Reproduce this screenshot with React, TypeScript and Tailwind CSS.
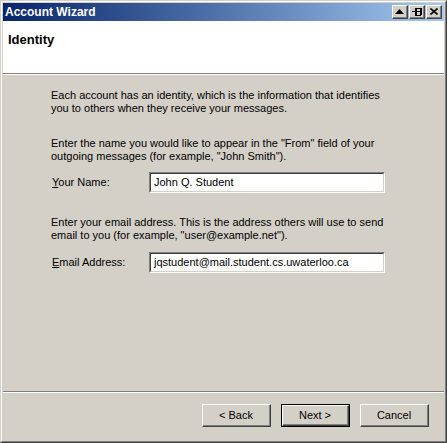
import React from "react";

const font = { fontFamily: '"Liberation Sans", Arial, sans-serif' };

function TitleButton({ children }: { children: React.ReactNode }) {
  return (
    <div className="w-[16px] h-[14px] bg-[#d4d0c8] border-t border-l border-t-white border-l-white border-r border-b border-r-[#404040] border-b-[#404040]">
      <div className="w-full h-full border-r border-b border-r-[#808080] border-b-[#808080] flex items-center justify-center">
        {children}
      </div>
    </div>
  );
}

function Field({ mnemonic, rest, value }: { mnemonic: string; rest: string; value: string }) {
  return (
    <div className="flex items-center h-[21px]">
      <div className="w-[98px] pl-[1px]">
        <span className="underline">{mnemonic}</span>
        {rest}
      </div>
      <div className="w-[236px] h-[21px] border-t border-l border-t-[#808080] border-l-[#808080] border-r border-b border-r-white border-b-white">
        <div className="w-full h-full bg-white border-t border-l border-t-[#404040] border-l-[#404040] border-r border-b border-r-[#d4d0c8] border-b-[#d4d0c8] flex items-center pl-[3px]">
          {value}
        </div>
      </div>
    </div>
  );
}

function Button({ label, isDefault }: { label: string; isDefault?: boolean }) {
  return (
    <div className={"w-[69px] h-[23px] " + (isDefault ? "border border-black" : "")}>
      <div className="w-full h-full bg-[#d4d0c8] border-t border-l border-t-white border-l-white border-r border-b border-r-[#404040] border-b-[#404040]">
        <div className="w-full h-full border-r border-b border-r-[#808080] border-b-[#808080] flex items-center justify-center">
          {label}
        </div>
      </div>
    </div>
  );
}

export default function App() {
  return (
    <div
      className="w-[447px] h-[443px] text-[11px] leading-[13px] text-black border-t border-l border-t-[#d4d0c8] border-l-[#d4d0c8] border-r border-b border-r-[#404040] border-b-[#404040]"
      style={font}
    >
      <div className="w-full h-full flex flex-col bg-[#d4d0c8] p-[1px] border-t border-l border-t-white border-l-white border-r border-b border-r-[#808080] border-b-[#808080]">
        {/* title bar */}
        <div className="h-[18px] shrink-0 flex items-center justify-between pl-[2px] pr-[2px] bg-gradient-to-r from-[#0a246a] to-[#a6caf0]">
          <span className="text-white font-bold text-[12px]">Account Wizard</span>
          <div className="flex gap-[1px]">
            <TitleButton>
              <svg width="9" height="6" viewBox="0 0 9 6">
                <path d="M0 5h9L4.5 0z" fill="black" />
              </svg>
            </TitleButton>
            <TitleButton>
              <svg width="11" height="9" viewBox="0 0 11 9" shapeRendering="crispEdges">
                <path d="M0 4h4M4 0v9M5 1h4v7H5zM5 4h4" stroke="black" strokeWidth="1" fill="none" transform="translate(0.5 0.5)" />
                <path d="M10 1v7" stroke="black" strokeWidth="1" transform="translate(0.5 0)" />
              </svg>
            </TitleButton>
            <TitleButton>
              <svg width="8" height="7" viewBox="0 0 8 7">
                <path d="M0.5 0.5l7 6M7.5 0.5l-7 6" stroke="black" strokeWidth="1.6" />
              </svg>
            </TitleButton>
          </div>
        </div>

        {/* header */}
        <div className="h-[52px] shrink-0 bg-white pl-[5px] pt-[12px]">
          <span className="font-bold text-[13px]">Identity</span>
        </div>
        <div className="h-[2px] shrink-0 border-t border-t-[#808080] border-b border-b-white" />

        {/* content */}
        <div className="flex-1 flex flex-col pl-[48px] pt-[14px]">
          <p>
            Each account has an identity, which is the information that identifies
            <br />
            you to others when they receive your messages.
          </p>
          <p className="mt-[22px]">
            Enter the name you would like to appear in the "From" field of your
            <br />
            outgoing messages (for example, "John Smith").
          </p>
          <div className="mt-[9px]">
            <Field mnemonic="Y" rest="our Name:" value="John Q. Student" />
          </div>
          <p className="mt-[23px]">
            Enter your email address. This is the address others will use to send
            <br />
            email to you (for example, "user@example.net").
          </p>
          <div className="mt-[10px]">
            <Field mnemonic="E" rest="mail Address:" value="jqstudent@mail.student.cs.uwaterloo.ca" />
          </div>
        </div>

        <div className="h-[2px] shrink-0 border-t border-t-[#808080] border-b border-b-white" />
        <div className="h-[47px] shrink-0 flex justify-end gap-[10px] pt-[11px] pr-[15px]">
          <Button label="< Back" />
          <Button label="Next >" isDefault />
          <Button label="Cancel" />
        </div>
      </div>
    </div>
  );
}
